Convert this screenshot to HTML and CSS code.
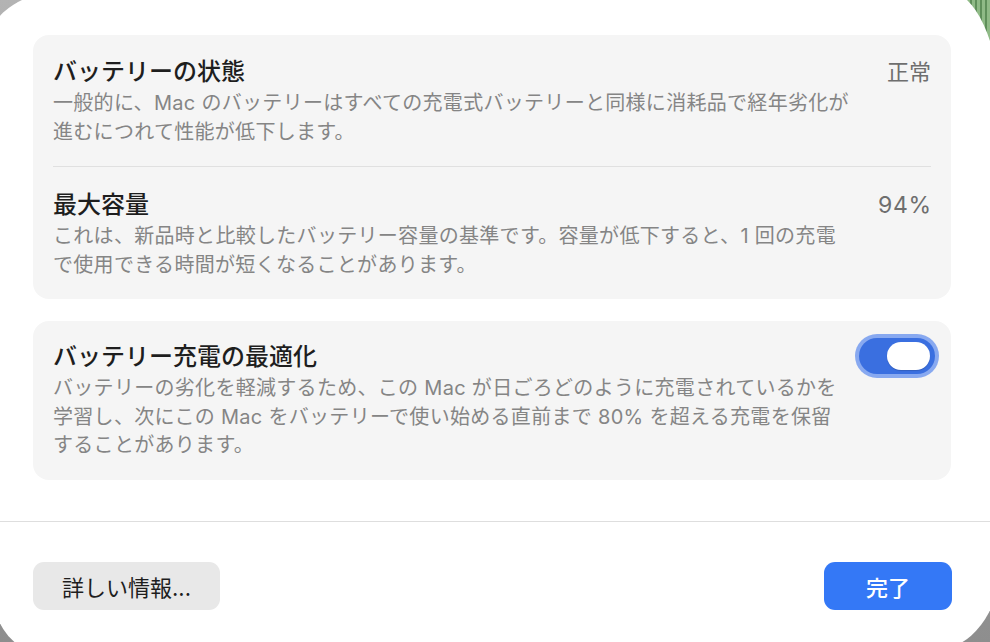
FILE: index.html
```html
<!DOCTYPE html>
<html lang="ja">
<head>
<meta charset="utf-8">
<title>バッテリー</title>
<link rel="stylesheet" href="styles.css">
</head>
<body>
<div class="window">
  <div class="content">
    <section class="card">
      <div class="row row-top">
        <div class="text">
          <div class="title">バッテリーの状態</div>
          <div class="desc">一般的に、Mac のバッテリーはすべての充電式バッテリーと同様に消耗品で経年劣化が<br>進むにつれて性能が低下します。</div>
        </div>
        <div class="value">正常</div>
      </div>
      <div class="sep"></div>
      <div class="row row-bottom">
        <div class="text">
          <div class="title">最大容量</div>
          <div class="desc">これは、新品時と比較したバッテリー容量の基準です。容量が低下すると、1 回の充電<br>で使用できる時間が短くなることがあります。</div>
        </div>
        <div class="value value-num">94%</div>
      </div>
    </section>
    <section class="card">
      <div class="row row-single">
        <div class="text">
          <div class="title">バッテリー充電の最適化</div>
          <div class="desc">バッテリーの劣化を軽減するため、この Mac が日ごろどのように充電されているかを<br>学習し、次にこの Mac をバッテリーで使い始める直前まで 80% を超える充電を保留<br>することがあります。</div>
        </div>
        <div class="toggle"><span class="knob"></span></div>
      </div>
    </section>
  </div>
  <div class="divider"></div>
  <div class="footer">
    <button class="btn">詳しい情報...</button>
    <button class="btn primary">完了</button>
  </div>
</div>
</body>
</html>
```
FILE: styles.css
```css
html, body {
  margin: 0;
  padding: 0;
  overflow: hidden;
}
body {
  width: 990px;
  height: 642px;
  font-family: "Inter", "Noto Sans CJK JP", sans-serif;
  background:
    repeating-linear-gradient(90deg, #5f8f5a 0 2px, #8fba86 2px 5px) right top / 60px 90px no-repeat,
    linear-gradient(180deg, #b3b3b3, #8e8e8e);
}
.window {
  width: 1010px;
  height: 660px;
  margin: -10px 0 0 -10px;
  background: #ffffff;
  border-radius: 80px 55px 65px 45px / 50px 120px 85px 72px;
  display: flex;
  flex-direction: column;
  box-sizing: border-box;
}
.content {
  padding: 45px 49px 41px 43px;
  display: flex;
  flex-direction: column;
  gap: 22px;
}
.card {
  background: #f5f5f5;
  border-radius: 16px;
}
.row {
  display: flex;
  align-items: flex-start;
  justify-content: space-between;
  padding: 22px 20px 20px 20px;
}
.row-bottom {
  padding-top: 23px;
}
.row-single {
  padding-top: 21px;
}
.text {
  display: flex;
  flex-direction: column;
}
.title {
  font-size: 24px;
  line-height: 30px;
  font-weight: 500;
  color: #1e1e1e;
}
.desc {
  margin-top: 2px;
  font-size: 20px;
  line-height: 28.5px;
  color: #858585;
  letter-spacing: 0.3px;
  white-space: nowrap;
}
.value {
  font-size: 22px;
  line-height: 30px;
  color: #6e6e6e;
}
.value-num {
  font-size: 23px;
  letter-spacing: 0.8px;
  margin-right: -1px;
}
.sep {
  height: 1px;
  margin: 0 20px;
  background: #e0e0e0;
}
.toggle {
  width: 76px;
  height: 36px;
  margin-top: -4px;
  margin-right: -4px;
  border-radius: 18px;
  background: #3a6fe0;
  box-shadow: 0 0 0 4px #88a9f0;
  display: flex;
  align-items: center;
  justify-content: flex-end;
  padding-right: 5px;
  box-sizing: border-box;
  flex: none;
}
.knob {
  width: 43px;
  height: 28px;
  border-radius: 14px;
  background: #ffffff;
  box-shadow: 0 1px 1px rgba(0, 0, 0, 0.15);
}
.divider {
  height: 1px;
  background: #dedede;
}
.footer {
  display: flex;
  justify-content: space-between;
  padding: 41px 48px 40px 43px;
}
.btn {
  height: 48px;
  border: none;
  border-radius: 11px;
  font-family: "Inter", "Noto Sans CJK JP", sans-serif;
  font-size: 22px;
  color: #1e1e1e;
  background: #e8e8e8;
  padding: 0 23px;
  width: 187px;
}
.btn.primary {
  width: 128px;
  padding: 0;
  background: #3478f6;
  color: #ffffff;
  font-weight: 500;
}
```
